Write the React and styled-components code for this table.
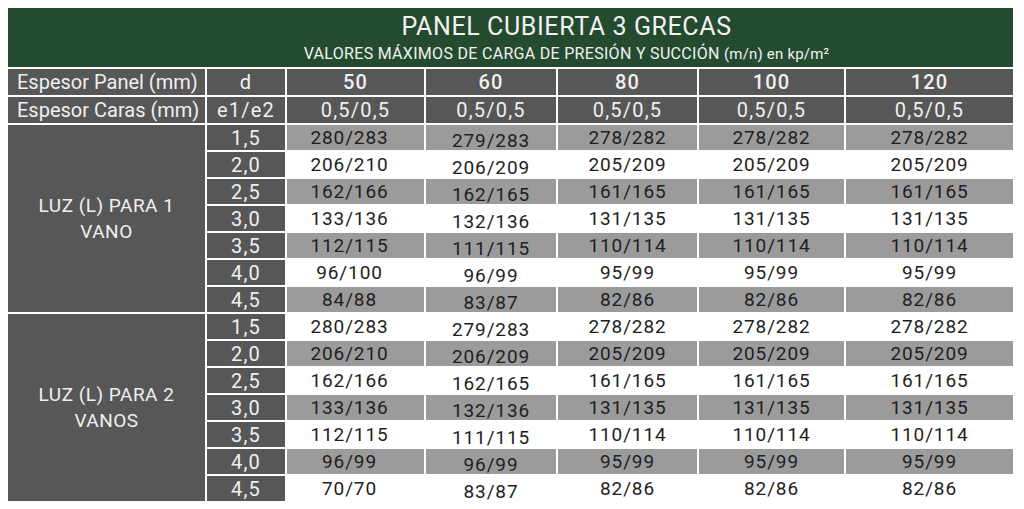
import React from "react";
import styled, { createGlobalStyle } from "styled-components";

const GlobalStyle = createGlobalStyle`
    body {
        margin: 0;
        padding: 8px;
        background: #fff;
        font-family: Roboto, "Liberation Sans", sans-serif;
    }
`

const thicknesses = ["50", "60", "80", "100", "120"];

const groups = [
    {
        label: ["LUZ (L) PARA 1", "VANO"],
        rows: [
            ["1,5", "280/283", "279/283", "278/282", "278/282", "278/282"],
            ["2,0", "206/210", "206/209", "205/209", "205/209", "205/209"],
            ["2,5", "162/166", "162/165", "161/165", "161/165", "161/165"],
            ["3,0", "133/136", "132/136", "131/135", "131/135", "131/135"],
            ["3,5", "112/115", "111/115", "110/114", "110/114", "110/114"],
            ["4,0", "96/100", "96/99", "95/99", "95/99", "95/99"],
            ["4,5", "84/88", "83/87", "82/86", "82/86", "82/86"],
        ],
    },
    {
        label: ["LUZ (L) PARA 2", "VANOS"],
        rows: [
            ["1,5", "280/283", "279/283", "278/282", "278/282", "278/282"],
            ["2,0", "206/210", "206/209", "205/209", "205/209", "205/209"],
            ["2,5", "162/166", "162/165", "161/165", "161/165", "161/165"],
            ["3,0", "133/136", "132/136", "131/135", "131/135", "131/135"],
            ["3,5", "112/115", "111/115", "110/114", "110/114", "110/114"],
            ["4,0", "96/99", "96/99", "95/99", "95/99", "95/99"],
            ["4,5", "70/70", "83/87", "82/86", "82/86", "82/86"],
        ],
    },
];

const App = () => {
    let rowIndex = 0;
    return (
        <>
            <GlobalStyle/>
            <Table>
                <Banner>
                    <BannerTitle>PANEL CUBIERTA 3 GRECAS</BannerTitle>
                    <BannerSub>
                        VALORES MÁXIMOS DE CARGA DE PRESIÓN Y SUCCIÓN <small>(m/n) en kp/m²</small>
                    </BannerSub>
                </Banner>

                <HeadCell $left>Espesor Panel (mm)</HeadCell>
                <HeadCell>d</HeadCell>
                {thicknesses.map((t) => (
                    <HeadCell key={t} $bold>{t}</HeadCell>
                ))}

                <HeadCell $left>Espesor Caras (mm)</HeadCell>
                <HeadCell>e1/e2</HeadCell>
                {thicknesses.map((t) => (
                    <HeadCell key={t}>0,5/0,5</HeadCell>
                ))}

                {groups.map((group) => (
                    <React.Fragment key={group.label[0]}>
                        <GroupLabel>
                            {group.label[0]}
                            <br/>
                            {group.label[1]}
                        </GroupLabel>
                        {group.rows.map((row) => {
                            const shaded = rowIndex % 2 === 0;
                            rowIndex++;
                            return (
                                <React.Fragment key={row[0]}>
                                    <SpanCell>{row[0]}</SpanCell>
                                    {row.slice(1).map((v, i) => (
                                        <DataCell key={i} $shaded={shaded} $drop={i === 1} $shift={i === 0}>
                                            {v}
                                        </DataCell>
                                    ))}
                                </React.Fragment>
                            );
                        })}
                    </React.Fragment>
                ))}
            </Table>
        </>
    )
}

const Table = styled.div`
    display: grid;
    grid-template-columns: 197px 78px 137px 130px 139px 145px 167px;
    grid-template-rows: 59px 26px 26px repeat(14, 25px);
    gap: 2px;
    width: 1005px;
    background: #fff;
`

const Banner = styled.div`
    grid-column: 1 / -1;
    background-color: #244a30;
    color: #f2f2f2;
    display: flex;
    flex-direction: column;
    align-items: center;
    padding-top: 3px;
    padding-left: 112px;
`

const BannerTitle = styled.div`
    font-size: 25px;
    line-height: 32px;
    letter-spacing: 0.6px;
`

const BannerSub = styled.div`
    font-size: 16px;
    line-height: 22px;
    letter-spacing: 0.3px;
    small {
        font-size: 15px;
        letter-spacing: 0.2px;
    }
`

const Cell = styled.div`
    display: flex;
    align-items: center;
    justify-content: center;
    font-size: 19px;
    line-height: 1;
`

const HeadCell = styled(Cell)`
    background-color: #575757;
    color: #f0f0f0;
    font-size: 20px;
    font-weight: ${(p) => (p.$bold ? 500 : 400)};
    letter-spacing: ${(p) => (p.$left ? "0" : "1.2px")};
    justify-content: ${(p) => (p.$left ? "flex-start" : "center")};
    padding-left: ${(p) => (p.$left ? "9px" : "0")};
`

const GroupLabel = styled(Cell)`
    grid-row: span 7;
    background-color: #575757;
    color: #f0f0f0;
    text-align: center;
    line-height: 26px;
    letter-spacing: 0.5px;
`

const SpanCell = styled(Cell)`
    background-color: #575757;
    color: #f0f0f0;
    font-size: 20px;
    letter-spacing: 1.2px;
`

const DataCell = styled(Cell)`
    background-color: ${(p) => (p.$shaded ? "#9b9b9b" : "#fff")};
    color: #1e1e1e;
    letter-spacing: 0.9px;
    padding-top: ${(p) => (p.$drop ? "5px" : "0")};
    padding-right: ${(p) => (p.$shift ? "12px" : "0")};
`

export default App;
